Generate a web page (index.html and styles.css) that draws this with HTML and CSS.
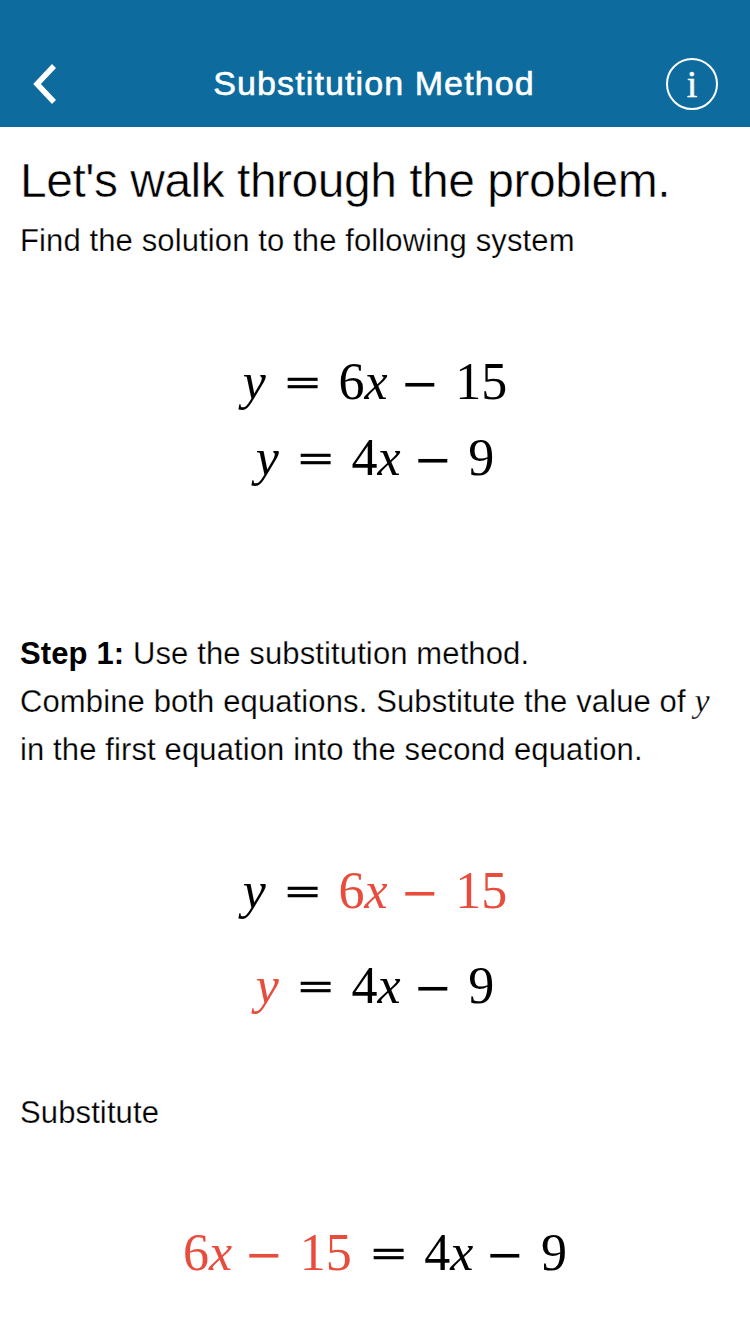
FILE: index.html
```html
<!DOCTYPE html>
<html lang="en">
<head>
  <meta charset="UTF-8">
  <meta name="viewport" content="width=device-width, initial-scale=1.0">
  <title>Substitution Method</title>
  <link rel="stylesheet" href="styles.css">
</head>
<body>
  <header class="navbar">
    <svg class="nav-icon" width="26" height="40" viewBox="0 0 26 40" fill="none">
      <path d="M22 2 L5 20 L22 38" stroke="#fff" stroke-width="5.5"/>
    </svg>
    <h1 class="nav-title">Substitution Method</h1>
    <div class="info-btn">i</div>
  </header>

  <main class="content">
    <h2 class="headline">Let's walk through the problem.</h2>
    <p class="text intro">Find the solution to the following system</p>

    <div class="equations first">
      <div class="eq"><i>y</i> <span class="eq-sign">=</span> 6<i>x</i> <span class="minus">&minus;</span> 15</div>
      <div class="eq"><i>y</i> <span class="eq-sign">=</span> 4<i>x</i> <span class="minus">&minus;</span> 9</div>
    </div>

    <p class="text step">
      <b>Step 1:</b> Use the substitution method.<br>
      Combine both equations. Substitute the value of <i class="var">y</i><br>
      in the first equation into the second equation.
    </p>

    <div class="equations second">
      <div class="eq"><i>y</i> <span class="eq-sign">=</span> <span class="red">6<i>x</i> <span class="minus">&minus;</span> 15</span></div>
      <div class="eq"><i class="red">y</i> <span class="eq-sign">=</span> 4<i>x</i> <span class="minus">&minus;</span> 9</div>
    </div>

    <p class="text substitute">Substitute</p>

    <div class="equations third">
      <div class="eq"><span class="red">6<i>x</i> <span class="minus">&minus;</span> 15</span> <span class="eq-sign">=</span> 4<i>x</i> <span class="minus">&minus;</span> 9</div>
    </div>
  </main>
</body>
</html>
```

FILE: styles.css
```css
html,
body {
  margin: 0;
  padding: 0;
}

body {
  width: 750px;
  height: 1334px;
  overflow: hidden;
  background: #fff;
  color: #000;
  font-family: "Liberation Sans", Arial, sans-serif;
}

.navbar {
  height: 127px;
  box-sizing: border-box;
  padding: 40px 32px 0 32px;
  display: flex;
  align-items: center;
  background: #0d6b9e;
  color: #fff;
}

.nav-icon {
  display: block;
}

.nav-title {
  flex: 1;
  margin: 0;
  padding-left: 24px;
  text-align: center;
  font-size: 34px;
  font-weight: 400;
  letter-spacing: 1.1px;
  -webkit-text-stroke: 0.6px #fff;
}

.info-btn {
  width: 48px;
  height: 48px;
  border: 2px solid #fff;
  border-radius: 50%;
  display: flex;
  align-items: center;
  justify-content: center;
  font-family: "Liberation Serif", serif;
  font-size: 38px;
  -webkit-text-stroke: 0.5px #fff;
}

.content {
  padding: 0 20px;
}

/* thin the regular face down towards a light weight */
.headline {
  margin: 24px 0 0 0;
  font-size: 48px;
  line-height: 60px;
  font-weight: 400;
  letter-spacing: -0.5px;
  -webkit-text-stroke: 0.5px #fff;
}

.text {
  margin: 0;
  font-size: 31px;
  line-height: 48px;
  letter-spacing: 0.12px;
  -webkit-text-stroke: 0.25px #fff;
}

.text b {
  -webkit-text-stroke: 0;
}

.intro {
  margin-top: 6px;
}

.var {
  font-family: "Liberation Serif", serif;
  font-size: 34px;
  line-height: 0;
}

.equations {
  text-align: center;
  font-family: "Liberation Serif", serif;
  font-size: 52px;
}

.eq {
  word-spacing: 3px;
}

/* the reference draws these wider and heavier than the font does */
.eq-sign {
  display: inline-block;
  margin: 0 5px 0 6px;
  line-height: 0;
  font-weight: 700;
  -webkit-text-stroke: 0.7px currentColor;
  transform: scale(1.2, 0.72) translateY(2px);
}

.minus {
  display: inline-block;
  margin: 0 5px 0 1px;
  line-height: 0;
  font-weight: 700;
  transform: scale(1.2, 1) translateY(3px);
}

.red {
  color: #e74c3c;
}

.first {
  margin-top: 79px;
  line-height: 76px;
}

.step {
  margin-top: 134px;
}

.second {
  margin-top: 69px;
  line-height: 95px;
}

.substitute {
  margin-top: 56px;
}

.third {
  margin-top: 78px;
  line-height: 76px;
}
```
